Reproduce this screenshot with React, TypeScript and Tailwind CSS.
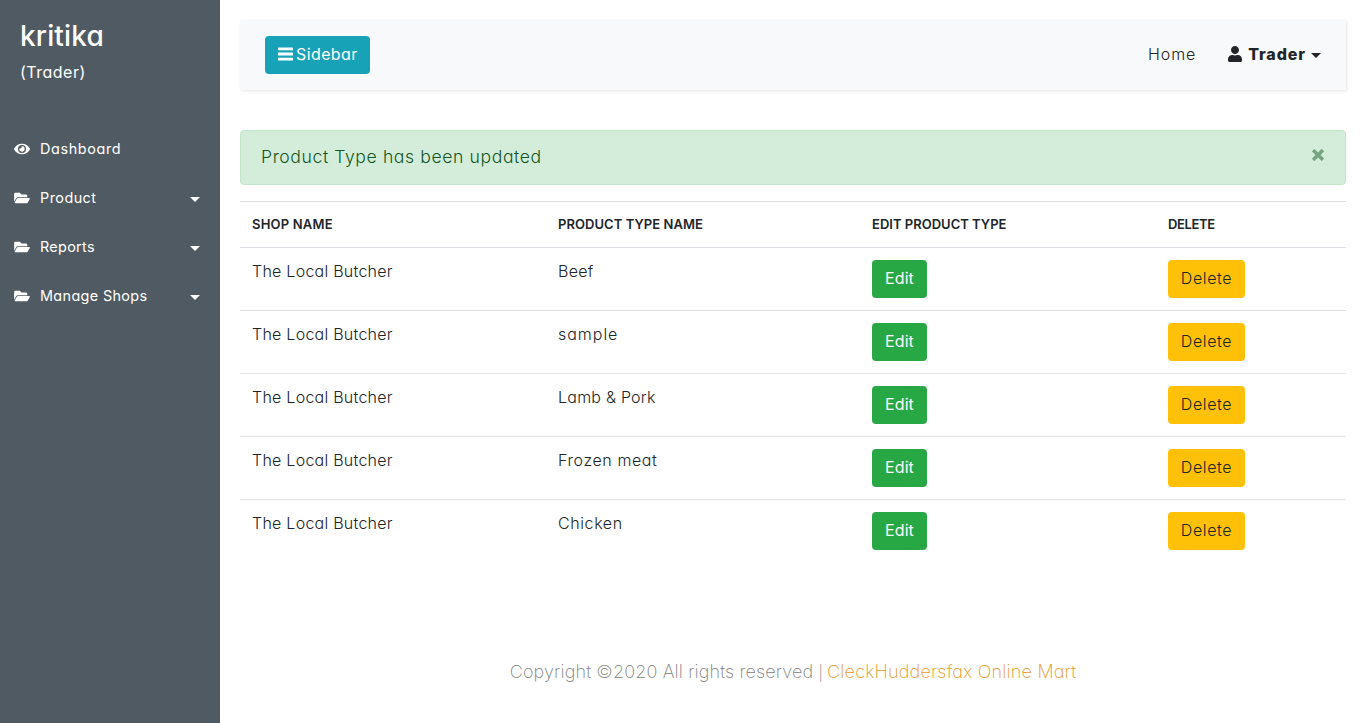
import { FaEye, FaFolderOpen, FaUser } from "react-icons/fa";

const menu = [
  { label: "Product", tracking: "tracking-[0.46px]" },
  { label: "Reports", tracking: "tracking-[0.3px]" },
  { label: "Manage Shops", tracking: "tracking-[0.36px]" },
];

const products = [
  { name: "Beef", tracking: "tracking-[0.3px]" },
  { name: "sample", tracking: "tracking-[0.98px]" },
  { name: "Lamb & Pork", tracking: "tracking-[0.24px]" },
  { name: "Frozen meat", tracking: "tracking-[0.6px]" },
  { name: "Chicken", tracking: "tracking-[0.6px]" },
];

function Caret({ className = "" }: { className?: string }) {
  return (
    <span
      className={`inline-block h-0 w-0 border-x-[5px] border-t-[5px] border-x-transparent ${className}`}
    />
  );
}

function Bars() {
  return (
    <svg viewBox="0 0 15 14" className="mr-[3px] h-[14px] w-[15px]" fill="currentColor">
      <rect x="0" y="0.5" width="15" height="2.8" rx="0.5" />
      <rect x="0" y="5.6" width="15" height="2.8" rx="0.5" />
      <rect x="0" y="10.7" width="15" height="2.8" rx="0.5" />
    </svg>
  );
}

function Sidebar() {
  return (
    <aside className="w-[220px] shrink-0 bg-[#505a62] text-white">
      <div className="flex h-[124px] flex-col px-5 pt-[19px]">
        <h3 className="text-[28px] leading-[34px] font-medium tracking-[0.15px]">kritika</h3>
        <span className="mt-[7px] text-[16px] leading-6 tracking-[0.5px]">(Trader)</span>
      </div>
      <ul className="text-[14.4px] leading-[21px]">
        <li className="flex h-[49px] items-center pl-[14px]">
          <FaEye className="mr-[10px] h-4 w-4" />
          <span className="tracking-[0.62px]">Dashboard</span>
        </li>
        {menu.map((item) => (
          <li key={item.label} className="flex h-[49px] items-center pr-5 pl-[14px]">
            <FaFolderOpen className="mr-[10px] h-[14px] w-4" />
            <span className={item.tracking}>{item.label}</span>
            <Caret className="mt-[3px] ml-auto border-t-white" />
          </li>
        ))}
      </ul>
    </aside>
  );
}

function Navbar() {
  return (
    <nav className="mb-10 flex h-[70px] shrink-0 items-center bg-[#f8f9fa] pr-[25px] pl-[25px] shadow-[1px_1px_3px_rgba(0,0,0,0.1)]">
      <button className="flex h-[38px] w-[105px] items-center rounded bg-[#17a2b8] pb-[2px] pl-[13px] text-white">
        <Bars />
        <span className="tracking-[0.4px]">Sidebar</span>
      </button>
      <a className="mr-8 ml-auto pb-[2px] font-light tracking-[0.9px]">Home</a>
      <a className="flex items-center pb-[2px] font-extrabold [font-feature-settings:normal]">
        <FaUser className="mr-[6px] h-4 w-[14px]" />
        <span className="tracking-[0.92px]">Trader</span>
        <Caret className="mt-[3px] ml-[5px] border-t-[#212529]" />
      </a>
    </nav>
  );
}

export default function App() {
  return (
    <div className="flex h-[723px] overflow-hidden bg-white font-['Inter',sans-serif] text-[16px] leading-6 text-[#212529] [font-feature-settings:'cv11']">
      <Sidebar />
      <main className="flex min-w-0 flex-1 flex-col pt-5 pr-5 pl-5">
        <Navbar />
        <div className="mb-4 flex h-[55px] shrink-0 items-start justify-between rounded border border-[#c3e6cb] bg-[#d4edda] pt-3 pr-[21px] pl-5 text-[#155724]">
          <span className="text-[17.6px] leading-[27px] font-light tracking-[0.6px]">
            Product Type has been updated
          </span>
          <button aria-label="Close" className="pt-[6px] text-[#75a580]">
            <svg viewBox="0 0 12 12" className="h-3 w-3">
              <path
                d="M2.4 2.4 9.6 9.6M9.6 2.4 2.4 9.6"
                stroke="currentColor"
                strokeWidth="3.6"
                strokeLinecap="square"
              />
            </svg>
          </button>
        </div>
        <table className="w-full table-fixed border-collapse text-left">
          <colgroup>
            <col className="w-[306px]" />
            <col className="w-[314px]" />
            <col className="w-[296px]" />
            <col />
          </colgroup>
          <thead>
            <tr className="h-[46px] border-t border-[#dee2e6] text-[13px] [&>th]:px-3 [&>th]:pb-[2px] [&>th]:font-semibold">
              <th className="tracking-[0.2px]">SHOP NAME</th>
              <th className="tracking-[0.06px]">PRODUCT TYPE NAME</th>
              <th className="tracking-[0.01px]">EDIT PRODUCT TYPE</th>
              <th className="tracking-[-0.35px]">DELETE</th>
            </tr>
          </thead>
          <tbody>
            {products.map((product) => (
              <tr
                key={product.name}
                className="h-[63px] border-t border-[#dee2e6] align-top font-light [&>td]:px-3 [&>td]:pt-3"
              >
                <td className="tracking-[0.25px]">
                  <span className="-mt-px block">The Local Butcher</span>
                </td>
                <td className={product.tracking}>
                  <span className="-mt-px block">{product.name}</span>
                </td>
                <td>
                  <button className="block h-[38px] w-[55px] rounded bg-[#28a745] pb-[2px] font-normal tracking-[0.1px] text-white">
                    Edit
                  </button>
                </td>
                <td>
                  <button className="block h-[38px] w-[77px] rounded bg-[#ffc107] pb-[2px] tracking-[0.63px]">
                    Delete
                  </button>
                </td>
              </tr>
            ))}
          </tbody>
        </table>
        <footer className="mt-auto mb-9 text-center text-[18px] leading-7 font-extralight text-[#808080]">
          <span className="tracking-[0.14px]">Copyright ©2020 All rights reserved </span>
          <span className="text-[15px]">| </span>
          <a className="tracking-[0.2px] text-[#e8951c]">CleckHuddersfax Online Mart</a>
        </footer>
      </main>
    </div>
  );
}
